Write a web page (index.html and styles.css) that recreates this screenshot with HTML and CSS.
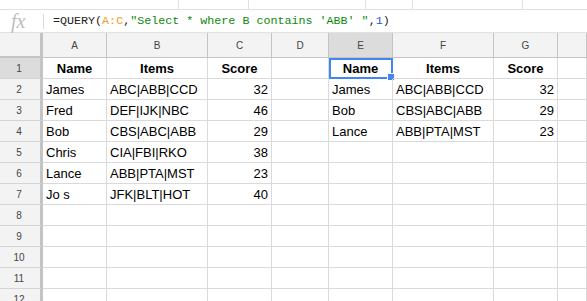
FILE: index.html
```html
<!DOCTYPE html>
<html lang="en">
<head>
    <meta charset="UTF-8">
    <title>QUERY contains</title>
    <link rel="stylesheet" href="styles.css">
</head>
<body>
    <div class="toolbar">
        <span class="tb tb1"></span>
        <span class="tb tb2"></span>
        <span class="tb tb3"></span>
        <span class="tb tb4"></span>
        <span class="tb tb5"></span>
    </div>

    <div class="formula-bar">
        <span class="fx">fx</span>
        <span class="sep"></span>
        <div class="formula">=QUERY(<span class="f-range">A:C</span>,<span class="f-str">"Select * where B contains 'ABB' "</span>,<span class="f-num">1</span>)</div>
    </div>

    <div class="sheet">
        <div class="row head-row">
            <div class="corner"></div>
            <div class="col-head">A</div>
            <div class="col-head">B</div>
            <div class="col-head">C</div>
            <div class="col-head">D</div>
            <div class="col-head active">E</div>
            <div class="col-head">F</div>
            <div class="col-head">G</div>
            <div class="col-head"></div>
        </div>

        <div class="row">
            <div class="row-head active">1</div>
            <div class="cell bold">Name</div>
            <div class="cell bold">Items</div>
            <div class="cell bold">Score</div>
            <div class="cell"></div>
            <div class="cell bold selected">Name<span class="handle"></span></div>
            <div class="cell bold">Items</div>
            <div class="cell bold">Score</div>
            <div class="cell"></div>
        </div>
        <div class="row">
            <div class="row-head">2</div>
            <div class="cell">James</div>
            <div class="cell">ABC|ABB|CCD</div>
            <div class="cell num">32</div>
            <div class="cell"></div>
            <div class="cell">James</div>
            <div class="cell">ABC|ABB|CCD</div>
            <div class="cell num">32</div>
            <div class="cell"></div>
        </div>
        <div class="row">
            <div class="row-head">3</div>
            <div class="cell">Fred</div>
            <div class="cell">DEF|IJK|NBC</div>
            <div class="cell num">46</div>
            <div class="cell"></div>
            <div class="cell">Bob</div>
            <div class="cell">CBS|ABC|ABB</div>
            <div class="cell num">29</div>
            <div class="cell"></div>
        </div>
        <div class="row">
            <div class="row-head">4</div>
            <div class="cell">Bob</div>
            <div class="cell">CBS|ABC|ABB</div>
            <div class="cell num">29</div>
            <div class="cell"></div>
            <div class="cell">Lance</div>
            <div class="cell">ABB|PTA|MST</div>
            <div class="cell num">23</div>
            <div class="cell"></div>
        </div>
        <div class="row">
            <div class="row-head">5</div>
            <div class="cell">Chris</div>
            <div class="cell">CIA|FBI|RKO</div>
            <div class="cell num">38</div>
            <div class="cell"></div>
            <div class="cell"></div>
            <div class="cell"></div>
            <div class="cell"></div>
            <div class="cell"></div>
        </div>
        <div class="row">
            <div class="row-head">6</div>
            <div class="cell">Lance</div>
            <div class="cell">ABB|PTA|MST</div>
            <div class="cell num">23</div>
            <div class="cell"></div>
            <div class="cell"></div>
            <div class="cell"></div>
            <div class="cell"></div>
            <div class="cell"></div>
        </div>
        <div class="row">
            <div class="row-head">7</div>
            <div class="cell">Jo s</div>
            <div class="cell">JFK|BLT|HOT</div>
            <div class="cell num">40</div>
            <div class="cell"></div>
            <div class="cell"></div>
            <div class="cell"></div>
            <div class="cell"></div>
            <div class="cell"></div>
        </div>
        <div class="row">
            <div class="row-head">8</div>
            <div class="cell"></div><div class="cell"></div><div class="cell"></div><div class="cell"></div>
            <div class="cell"></div><div class="cell"></div><div class="cell"></div><div class="cell"></div>
        </div>
        <div class="row">
            <div class="row-head">9</div>
            <div class="cell"></div><div class="cell"></div><div class="cell"></div><div class="cell"></div>
            <div class="cell"></div><div class="cell"></div><div class="cell"></div><div class="cell"></div>
        </div>
        <div class="row">
            <div class="row-head">10</div>
            <div class="cell"></div><div class="cell"></div><div class="cell"></div><div class="cell"></div>
            <div class="cell"></div><div class="cell"></div><div class="cell"></div><div class="cell"></div>
        </div>
        <div class="row">
            <div class="row-head">11</div>
            <div class="cell"></div><div class="cell"></div><div class="cell"></div><div class="cell"></div>
            <div class="cell"></div><div class="cell"></div><div class="cell"></div><div class="cell"></div>
        </div>
        <div class="row">
            <div class="row-head">12</div>
            <div class="cell"></div><div class="cell"></div><div class="cell"></div><div class="cell"></div>
            <div class="cell"></div><div class="cell"></div><div class="cell"></div><div class="cell"></div>
        </div>
    </div>
</body>
</html>
```

FILE: styles.css
```css
/* Grundlayout */
body {
    margin: 0;
    height: 301px;
    overflow: hidden;
    background: #fff;
    font-family: "Liberation Sans", Arial, sans-serif;
    color: #000;
}

/* abgeschnittene Werkzeugleiste oben */
.toolbar {
    position: relative;
    height: 9px;
    border-bottom: 1px solid #e2e2e2;
}
.tb {
    position: absolute;
    top: 0;
    width: 1px;
    height: 9px;
    background: #e2e2e2;
}
.tb1 { left: 178px; }
.tb2 { left: 248px; }
.tb3 { left: 365px; }
.tb4 { left: 412px; }
.tb5 { left: 522px; }

/* Formelleiste */
.formula-bar {
    display: flex;
    align-items: center;
    height: 22px;
    border-bottom: 1px solid #e2e2e2;
}
.fx {
    width: 30px;
    padding-left: 11px;
    font-family: "Liberation Serif", serif;
    font-style: italic;
    font-size: 20px;
    color: #bdbdbd;
    line-height: 22px;
}
.sep {
    width: 1px;
    height: 15px;
    background: #dadada;
    margin-left: 2px;
}
.formula {
    padding-left: 9px;
    font-family: "Liberation Mono", monospace;
    font-size: 11.7px;
    color: #222;
    white-space: pre;
}
.f-range { color: #f29b1d; }
.f-str { color: #0b8a0b; }
.f-num { color: #1a57d6; }

/* Tabelle */
.row {
    display: grid;
    grid-template-columns: 43px 64px 101px 64px 57px 64px 101px 64px 1fr;
    height: 21px;
}
.head-row {
    height: 25px;
}
.corner,
.row-head {
    background: #f3f3f3;
    border-right: 3px solid #c4c4c4;
    border-bottom: 1px solid #c4c4c4;
}
.corner {
    border-bottom-width: 2px;
}
.row-head {
    display: flex;
    align-items: center;
    justify-content: center;
    padding-right: 2px;
    font-size: 10px;
    color: #444;
    border-bottom-color: #d4d4d4;
}
.col-head {
    display: flex;
    align-items: center;
    justify-content: center;
    background: #f3f3f3;
    border-right: 1px solid #c4c4c4;
    border-bottom: 1px solid #c4c4c4;
    font-size: 10px;
    color: #444;
}
.col-head.active,
.row-head.active {
    background: #dcdcdc;
}
.cell {
    position: relative;
    display: flex;
    align-items: center;
    padding: 0 3px;
    border-right: 1px solid #dadada;
    border-bottom: 1px solid #dadada;
    font-size: 13px;
    white-space: nowrap;
    overflow: hidden;
}
.cell.bold {
    justify-content: center;
    font-weight: bold;
}
.cell.num {
    justify-content: flex-end;
}
.cell.selected {
    overflow: visible;
    outline: 2px solid #4285f4;
    outline-offset: -2px;
}
.handle {
    position: absolute;
    right: -3px;
    bottom: -3px;
    width: 6px;
    height: 6px;
    background: #4285f4;
    border: 1px solid #fff;
}
```
